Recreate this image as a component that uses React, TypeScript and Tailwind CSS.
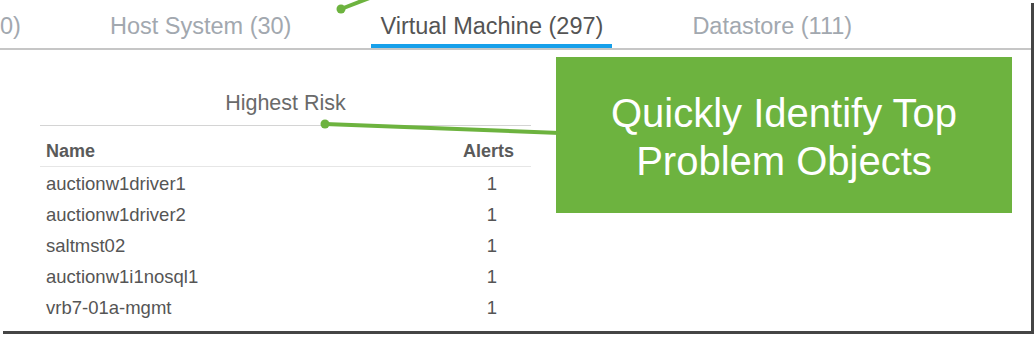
const tabs = [
  { label: "0)", active: false, first: true },
  { label: "Host System (30)", active: false },
  { label: "Virtual Machine (297)", active: true },
  { label: "Datastore (111)", active: false },
];

const rows = [
  { name: "auctionw1driver1", alerts: 1 },
  { name: "auctionw1driver2", alerts: 1 },
  { name: "saltmst02", alerts: 1 },
  { name: "auctionw1i1nosql1", alerts: 1 },
  { name: "vrb7-01a-mgmt", alerts: 1 },
];

function Connectors() {
  return (
    <svg
      className="pointer-events-none absolute left-0 top-0"
      width="1036"
      height="339"
      viewBox="0 0 1036 339"
    >
      <line x1="341" y1="9" x2="372" y2="-3" stroke="#6db33f" strokeWidth="4" />
      <circle cx="341" cy="9" r="4.5" fill="#6db33f" />
      <line x1="325" y1="124" x2="560" y2="133" stroke="#6db33f" strokeWidth="4" />
      <circle cx="325" cy="124" r="4.5" fill="#6db33f" />
    </svg>
  );
}

export default function App() {
  return (
    <div className="relative h-[339px] w-[1036px] overflow-hidden bg-white font-['Liberation_Sans',Arial,sans-serif]">
      <div className="relative h-[331px] w-[1031px] overflow-hidden bg-white shadow-[3px_3px_0_0_#454545]">
        <div className="flex h-[50px] items-start gap-[71px] border-b-2 border-[#c6c6c6]">
          {tabs.map((tab) => (
            <div
              key={tab.label}
              className={
                tab.active
                  ? "flex h-[48px] items-start border-b-4 border-[#17a0ea] px-[9px] pt-[13px] text-[23.5px] leading-[26px] text-[#545454]"
                  : tab.first
                    ? "-ml-[9px] flex h-[48px] items-start px-[9px] pt-[13px] text-[23.5px] leading-[26px] text-[#a2a8af]"
                    : "flex h-[48px] items-start px-[9px] pt-[13px] text-[23.5px] leading-[26px] text-[#a2a8af]"
              }
            >
              {tab.label}
            </div>
          ))}
        </div>

        <div className="ml-[40px] mt-[41px] w-[491px]">
          <div className="border-b border-[#d4d4d4] pb-[10px] text-center text-[21.5px] leading-[24px] text-[#6a6a6a]">
            Highest Risk
          </div>
          <div className="mt-[10px] flex h-[31px] items-center justify-between border-b border-[#e6e6e6] pl-[6px] pr-[17px] text-[18px] font-bold text-[#5a5a5a]">
            <span>Name</span>
            <span>Alerts</span>
          </div>
          {rows.map((row, i) => (
            <div
              key={row.name}
              className={
                i === 0
                  ? "mt-[1px] flex h-[31px] items-center justify-between pl-[6px] pr-[34px] text-[18.5px] text-[#555]"
                  : "flex h-[31px] items-center justify-between pl-[6px] pr-[34px] text-[18.5px] text-[#555]"
              }
            >
              <span>{row.name}</span>
              <span>{row.alerts}</span>
            </div>
          ))}
        </div>

        <div className="absolute left-[556px] top-[57px] flex h-[156px] w-[456px] flex-col items-center justify-center bg-[#6db33f] pt-[3px] text-center text-[40px] leading-[48px] text-white">
          <span>Quickly Identify Top</span>
          <span>Problem Objects</span>
        </div>

        <Connectors />
      </div>
    </div>
  );
}
